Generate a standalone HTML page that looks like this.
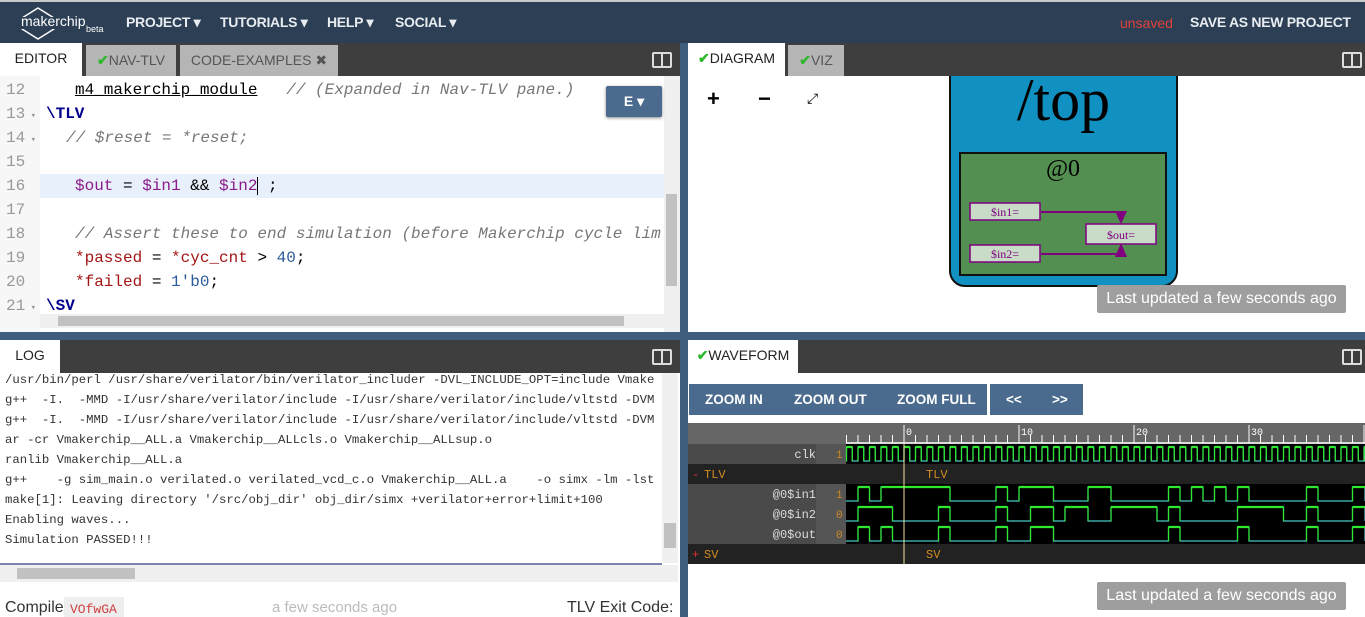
<!DOCTYPE html>
<html><head><meta charset="utf-8"><style>
*{margin:0;padding:0;box-sizing:border-box}
body{width:1365px;height:617px;overflow:hidden;background:#3f5d7d;font-family:"Liberation Sans",sans-serif;position:relative}
.a{position:absolute}
.nav{left:0;top:0;width:1365px;height:43px;background:#2c3f55;border-top:2px solid #c8c8c8}
.nav .m{position:absolute;top:12px;color:#e8ecf0;font-weight:bold;font-size:14px;letter-spacing:-0.3px}
.tabbar{background:#3e3e3e;height:33px}
.tab{position:absolute;top:2px;height:31px;font-size:14px;line-height:31px;color:#555;background:#b5b5b5;text-align:center}
.tab.on{background:#fff;color:#222;top:0;height:33px}
.ck{color:#2db82d;font-weight:bold}
.split{position:absolute;width:20px;height:16px;border:2px solid #ddd;border-radius:2px}
.split:after{content:"";position:absolute;left:7px;top:0;width:2px;height:12px;background:#ddd}
.ln{position:absolute;left:6px;color:#999;font-family:"Liberation Mono",monospace;font-size:16px}
.cl{position:absolute;white-space:pre;font-family:"Liberation Mono",monospace;font-size:16px}
.log{position:absolute;left:5px;white-space:pre;font-family:"Liberation Mono",monospace;font-size:12.3px;color:#333}
.btn{position:absolute;top:384px;height:31px;background:#4a6a8e;color:#fff;font-weight:bold;font-size:13.5px;line-height:31px}
</style></head><body>
<div class="a nav">
  <svg class="a" style="left:18px;top:3px" width="44" height="36"><polygon points="20,3 36,13 36,24 20,34 4,24 4,13" fill="none" stroke="#fff" stroke-width="1.5"/><rect x="0" y="12" width="44" height="12" fill="#2c3f55"/></svg>
  <div class="a" style="left:21px;top:11px;color:#fff;font-size:14px">makerchip</div>
  <div class="a" style="left:86px;top:22px;color:#fff;font-size:9px">beta</div>
  <div class="m" style="left:126px">PROJECT ▾</div>
  <div class="m" style="left:220px">TUTORIALS ▾</div>
  <div class="m" style="left:327px">HELP ▾</div>
  <div class="m" style="left:395px">SOCIAL ▾</div>
  <div class="a" style="left:1120px;top:13px;color:#e0413a;font-size:14px">unsaved</div>
  <div class="m" style="left:1190px">SAVE AS NEW PROJECT</div>
</div>

<div class="a tabbar" style="left:0;top:43px;width:680px"></div>
<div class="tab on" style="left:0;top:43px;width:82px">EDITOR</div>
<div class="tab" style="left:86px;top:45px;width:90px"><span class="ck">✔</span>NAV-TLV</div>
<div class="tab" style="left:180px;top:45px;width:158px">CODE-EXAMPLES ✖</div>
<div class="split" style="left:652px;top:52px"></div>
<div class="a" style="left:0;top:76px;width:680px;height:256px;background:#fff;overflow:hidden">
  <div class="a" style="left:0;top:0;width:40px;height:256px;background:#f7f7f7"></div>
  <div class="a" style="left:40px;top:98px;width:624px;height:24px;background:#e8f0fb"></div>
  <div class="ln" style="top:5px">12</div><div class="cl" style="left:75px;top:5px"><span style="text-decoration:underline">m4_makerchip_module</span>   <i style="color:#777">// (Expanded in Nav-TLV pane.)</i></div>
  <div class="ln" style="top:29px">13<span style="font-size:9px"> ▾</span></div><div class="cl" style="left:46px;top:29px;color:#00008b;font-weight:bold">\TLV</div>
  <div class="ln" style="top:53px">14<span style="font-size:9px"> ▾</span></div><div class="cl" style="left:66px;top:53px;color:#777"><i>// $reset = *reset;</i></div>
  <div class="ln" style="top:77px">15</div>
  <div class="ln" style="top:101px">16</div><div class="cl" style="left:75px;top:101px"><span style="color:#8b1a8b">$out</span> = <span style="color:#8b1a8b">$in1</span> &amp;&amp; <span style="color:#8b1a8b">$in2</span><span style="border-left:1px solid #000"> </span>;</div>
  <div class="ln" style="top:125px">17</div>
  <div class="ln" style="top:149px">18</div><div class="cl" style="left:75px;top:149px;color:#777"><i>// Assert these to end simulation (before Makerchip cycle lim</i></div>
  <div class="ln" style="top:173px">19</div><div class="cl" style="left:75px;top:173px"><span style="color:#a31515">*passed</span> = <span style="color:#a31515">*cyc_cnt</span> &gt; <span style="color:#2a5a9a">40</span>;</div>
  <div class="ln" style="top:197px">20</div><div class="cl" style="left:75px;top:197px"><span style="color:#a31515">*failed</span> = <span style="color:#2a5a9a">1'b0</span>;</div>
  <div class="ln" style="top:221px">21<span style="font-size:9px"> ▾</span></div><div class="cl" style="left:46px;top:221px;color:#00008b;font-weight:bold">\SV</div>
  <div class="a" style="left:40px;top:238px;width:624px;height:14px;background:#f0f0f0"></div>
  <div class="a" style="left:58px;top:240px;width:566px;height:10px;background:#c1c1c1"></div>
  <div class="a" style="left:664px;top:0;width:16px;height:256px;background:#f0f0f0"></div>
  <div class="a" style="left:666px;top:118px;width:11px;height:92px;background:#c1c1c1"></div>
  <div class="a" style="left:606px;top:10px;width:56px;height:31px;background:#4a6a8e;color:#fff;font-weight:bold;font-size:14px;line-height:31px;text-align:center;border-radius:2px;box-shadow:0 1px 3px #888">E ▾</div>
</div>

<div class="a tabbar" style="left:0;top:340px;width:680px"></div>
<div class="tab on" style="left:0;top:340px;width:60px">LOG</div>
<div class="split" style="left:652px;top:349px"></div>
<div class="a" style="left:0;top:373px;width:680px;height:244px;background:#fff;overflow:hidden">
  <div class="log" style="top:0">/usr/bin/perl /usr/share/verilator/bin/verilator_includer -DVL_INCLUDE_OPT=include Vmake</div>
  <div class="log" style="top:20px">g++  -I.  -MMD -I/usr/share/verilator/include -I/usr/share/verilator/include/vltstd -DVM</div>
  <div class="log" style="top:40px">g++  -I.  -MMD -I/usr/share/verilator/include -I/usr/share/verilator/include/vltstd -DVM</div>
  <div class="log" style="top:60px">ar -cr Vmakerchip__ALL.a Vmakerchip__ALLcls.o Vmakerchip__ALLsup.o</div>
  <div class="log" style="top:80px">ranlib Vmakerchip__ALL.a</div>
  <div class="log" style="top:100px">g++    -g sim_main.o verilated.o verilated_vcd_c.o Vmakerchip__ALL.a    -o simx -lm -lst</div>
  <div class="log" style="top:120px">make[1]: Leaving directory '/src/obj_dir' obj_dir/simx +verilator+error+limit+100</div>
  <div class="log" style="top:140px">Enabling waves...</div>
  <div class="log" style="top:160px">Simulation PASSED!!!</div>
  <div class="a" style="left:662px;top:0;width:16px;height:190px;background:#f0f0f0"></div>
  <div class="a" style="left:664px;top:150px;width:12px;height:25px;background:#c1c1c1"></div>
  <div class="a" style="left:0;top:190px;width:662px;height:2px;background:#7b84b0"></div>
  <div class="a" style="left:0;top:192px;width:678px;height:17px;background:#f0f0f0"></div>
  <div class="a" style="left:17px;top:195px;width:118px;height:11px;background:#c1c1c1"></div>
  <div class="a" style="left:5px;top:226px;font-size:16px;color:#333">Compile</div>
  <div class="a" style="left:64px;top:224px;width:60px;height:22px;background:#eee;color:#d04040;font-family:'Liberation Mono',monospace;font-size:13px;padding:5px 0 0 6px">VOfwGA</div>
  <div class="a" style="left:272px;top:226px;font-size:15px;color:#bbb">a few seconds ago</div>
  <div class="a" style="left:567px;top:226px;font-size:16px;color:#333">TLV Exit Code:</div>
</div>

<div class="a tabbar" style="left:688px;top:43px;width:677px"></div>
<div class="tab on" style="left:688px;top:43px;width:97px"><span class="ck">✔</span>DIAGRAM</div>
<div class="tab" style="left:788px;top:45px;width:56px"><span class="ck">✔</span>VIZ</div>
<div class="split" style="left:1342px;top:52px"></div>
<div class="a" style="left:688px;top:76px;width:677px;height:256px;background:#fff;overflow:hidden">
  <div class="a" style="left:19px;top:10px;font-size:22px;font-weight:bold">+</div>
  <div class="a" style="left:70px;top:10px;font-size:22px;font-weight:bold">−</div>
  <div class="a" style="left:119px;top:14px;font-size:14px">⤢</div>
  <div class="a" style="left:261px;top:-4px;width:229px;height:215px;background:#1190c2;border:2px solid #111;border-radius:0 0 16px 16px"></div>
  <div class="a" style="left:261px;top:-10px;width:229px;text-align:center;font-family:'Liberation Serif',serif;font-size:60px">/top</div>
  <div class="a" style="left:271px;top:76px;width:208px;height:124px;background:#528f50;border:2px solid #111"></div>
  <div class="a" style="left:271px;top:80px;width:208px;text-align:center;font-family:'Liberation Serif',serif;font-size:24px">@0</div>
  <svg class="a" style="left:271px;top:76px" width="208" height="124">
    <path d="M82 60H162M82 102H162" stroke="#800080" stroke-width="2" fill="none"/>
    <polygon points="156,59 168,59 162,72" fill="#800080"/><polygon points="156,105 168,105 162,91" fill="#800080"/>
    <rect x="11" y="51" width="70" height="17" fill="#c8dcc8" stroke="#800080" stroke-width="1.5"/>
    <rect x="11" y="93" width="70" height="17" fill="#c8dcc8" stroke="#800080" stroke-width="1.5"/>
    <rect x="127" y="72" width="70" height="20" fill="#c8dcc8" stroke="#800080" stroke-width="1.5"/>
    <text x="46" y="64" font-family="Liberation Serif" font-size="12" fill="#800080" text-anchor="middle">$in1=</text>
    <text x="46" y="106" font-family="Liberation Serif" font-size="12" fill="#800080" text-anchor="middle">$in2=</text>
    <text x="162" y="87" font-family="Liberation Serif" font-size="12" fill="#800080" text-anchor="middle">$out=</text>
  </svg>
  <div class="a" style="left:409px;top:209px;width:249px;height:28px;background:#9e9e9e;color:#fff;font-size:16px;line-height:28px;text-align:center;border-radius:2px">Last updated a few seconds ago</div>
</div>

<div class="a tabbar" style="left:688px;top:340px;width:677px"></div>
<div class="tab on" style="left:688px;top:340px;width:110px"><span class="ck">✔</span>WAVEFORM</div>
<div class="split" style="left:1342px;top:349px"></div>
<div class="a" style="left:688px;top:373px;width:677px;height:244px;background:#fff"></div>
<div class="btn" style="left:689px;width:298px"><span class="a" style="left:16px">ZOOM IN</span><span class="a" style="left:105px">ZOOM OUT</span><span class="a" style="left:208px">ZOOM FULL</span></div>
<div class="btn" style="left:990px;width:93px"><span class="a" style="left:16px">&lt;&lt;</span><span class="a" style="left:62px">&gt;&gt;</span></div>
<svg class="a" style="left:688px;top:423px" width="677" height="141">
  <rect x="0" y="0" width="677" height="141" fill="#000"/>
  <rect x="0" y="0" width="677" height="21" fill="#666"/>
  <rect x="0" y="21" width="128" height="20" fill="#4a4a4a"/><rect x="128" y="21" width="30" height="20" fill="#555"/>
  <rect x="0" y="41" width="677" height="20" fill="#222"/>
  <rect x="0" y="61" width="128" height="60" fill="#4a4a4a"/><rect x="128" y="61" width="30" height="60" fill="#555"/>
  <rect x="0" y="121" width="677" height="20" fill="#222"/>
  <g font-family="Liberation Mono" font-size="12" fill="#ddd" text-anchor="end">
   <text x="128" y="35">clk</text><text x="128" y="75">@0$in1</text><text x="128" y="95">@0$in2</text><text x="128" y="115">@0$out</text></g>
  <g font-family="Liberation Mono" font-size="11" fill="#d08a20">
   <text x="148" y="35">1</text><text x="148" y="75">1</text><text x="148" y="95">0</text><text x="148" y="115">0</text>
   <text x="16" y="55" font-size="12">TLV</text><text x="238" y="55" font-size="12">TLV</text>
   <text x="16" y="135" font-size="12">SV</text><text x="238" y="135" font-size="12">SV</text></g>
  <text x="4" y="55" fill="#e03030" font-size="12" font-family="Liberation Mono">-</text>
  <text x="4" y="135" fill="#e03030" font-size="12" font-family="Liberation Mono">+</text>
  <g id="g"></g>
</svg>
<script>
(function(){
var g=document.getElementById('g'),ns='http://www.w3.org/2000/svg';
var X0=216,W=11.5,L=158,R=677;
function x(c){return X0+c*W;}
function el(t,a){var e=document.createElementNS(ns,t);for(var k in a)e.setAttribute(k,a[k]);g.appendChild(e);}
el('line',{x1:L,y1:20,x2:R,y2:20,stroke:'#fff','stroke-width':1.5});
for(var c=-5;c<=40;c++){var xx=x(c);if(xx<L)continue;var maj=(c%10==0);el('line',{x1:xx,y1:maj?2:12,x2:xx,y2:20,stroke:'#fff'});
 if(maj){var t=document.createElementNS(ns,'text');t.setAttribute('x',xx+2);t.setAttribute('y',12);t.setAttribute('fill','#fff');t.setAttribute('font-size','10');t.setAttribute('font-family','Liberation Mono');t.textContent=c;g.appendChild(t);}}
function wave(y0,hi){
 var top=y0+3,bot=y0+17,d='M'+L+' '+bot,hd='';
 hi.forEach(function(p){var a=Math.max(x(p[0]),L),b=Math.min(x(p[1]),R);d+=' H'+a+' V'+top+' H'+b+' V'+bot;hd+='M'+a+' '+top+'H'+b;});
 d+=' H'+R;
 el('path',{d:d,stroke:'#4ac8c8',fill:'none','stroke-width':1.2});
 el('path',{d:hd,stroke:'#2ee82e',fill:'none','stroke-width':2.2});
 hi.forEach(function(p){[p[0],p[1]].forEach(function(c){var xx=x(c);if(xx>L&&xx<R)el('line',{x1:xx,y1:top,x2:xx,y2:bot,stroke:'#2ee82e','stroke-width':1.2});});});
}
var ck=[];for(var c=-5;c<42;c++)ck.push([c,c+0.5]);
wave(21,ck);
wave(61,[[-4,-3],[-2,4],[8,9],[10,13],[16,18],[23,24],[25,26],[27,28],[29,30],[35,36],[39,45]]);
wave(81,[[-4,-1],[3,4],[8,9],[11,13],[14,16],[18,22],[23,24],[29,33],[35,36],[39,45]]);
wave(101,[[-4,-3],[-2,-1],[3,4],[8,9],[11,13],[23,24],[29,30],[35,36],[39,45]]);
el('line',{x1:x(0),y1:21,x2:x(0),y2:141,stroke:'#f0e0a0','stroke-width':1});
})();
</script>
<div class="a" style="left:1097px;top:582px;width:249px;height:28px;background:#9e9e9e;color:#fff;font-size:16px;line-height:28px;text-align:center;border-radius:2px">Last updated a few seconds ago</div>
</body></html>
